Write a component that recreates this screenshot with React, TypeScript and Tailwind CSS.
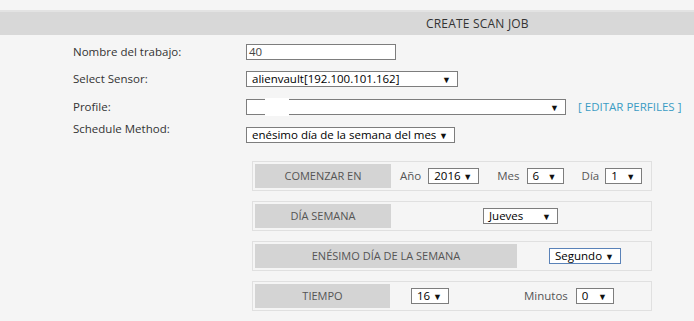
import type { ReactNode } from 'react';

function Caja({ w, children, focus = false, cover = false }: { w: string; children?: ReactNode; focus?: boolean; cover?: boolean }) {
  return (
    <div
      className={`relative flex h-[16px] items-center justify-between whitespace-nowrap bg-white pl-[5px] pr-[6px] text-[11.5px] leading-none text-black border ${
        focus ? 'border-[#5a82b8]' : 'border-[#7d7d7d]'
      } ${w}`}
    >
      <span>{children}</span>
      <span className="text-[9px] text-[#111]">▼</span>
      {cover && <div className="absolute left-[18px] top-[-2px] bottom-[-2px] w-[24px] bg-white" />}
    </div>
  );
}

function Etiqueta({ w, children }: { w: string; children: ReactNode }) {
  return (
    <div className={`flex h-[24px] items-center justify-center bg-[#d4d4d4] text-[11px] text-[#555] ${w}`}>
      {children}
    </div>
  );
}

export default function App() {
  return (
    <div className="min-h-[321px] w-[694px] bg-[#f5f5f5] pt-[10px] font-['Open_Sans',sans-serif] text-[11.5px] text-[#333]">
      <div className="flex h-[25px] items-center border-t-2 border-[#e3e3e3] bg-[#d8d8d8] pl-[426px] text-[12px] tracking-[0.2px] text-[#333]">
        CREATE SCAN JOB
      </div>

      <div className="flex flex-col pl-[73px]">
        <div className="mt-[9px] flex h-[16px] items-center">
          <div className="w-[173px]">Nombre del trabajo:</div>
          <div className="flex h-[16px] w-[150px] items-center border border-[#7d7d7d] bg-white pl-[2px] text-[11.5px] text-[#444]">40</div>
        </div>
        <div className="mt-[11px] flex h-[16px] items-center">
          <div className="w-[173px]">Select Sensor:</div>
          <Caja w="w-[212px]">alienvault[192.100.101.162]</Caja>
        </div>
        <div className="mt-[12px] flex h-[16px] items-center">
          <div className="w-[173px]">Profile:</div>
          <Caja w="w-[320px]" cover />
          <a className="ml-[12px] text-[11.5px] text-[#3a9cc4]">[ EDITAR PERFILES ]</a>
        </div>
        <div className="mt-[12px] flex h-[16px] items-start">
          <div className="-mt-[7px] w-[173px]">Schedule Method:</div>
          <Caja w="w-[209px]">enésimo día de la semana del mes</Caja>
        </div>
      </div>

      <div className="ml-[252px] mt-[18px] flex w-[400px] flex-col gap-[10px]">
        <div className="flex h-[30px] items-center border border-[#e0e0e0] p-[2px]">
          <Etiqueta w="w-[136px]">COMENZAR EN</Etiqueta>
          <span className="ml-[9px] text-[#555]">Año</span>
          <div className="ml-[7px]"><Caja w="w-[51px]">2016</Caja></div>
          <span className="ml-[18px] text-[#555]">Mes</span>
          <div className="ml-[7px]"><Caja w="w-[37px]">6</Caja></div>
          <span className="ml-[18px] text-[#555]">Día</span>
          <div className="ml-[6px]"><Caja w="w-[37px]">1</Caja></div>
        </div>

        <div className="flex h-[30px] items-center border border-[#e0e0e0] p-[2px]">
          <Etiqueta w="w-[136px]">DÍA SEMANA</Etiqueta>
          <div className="ml-[92px]"><Caja w="w-[75px]">Jueves</Caja></div>
        </div>

        <div className="flex h-[30px] items-center border border-[#e0e0e0] p-[2px]">
          <Etiqueta w="w-[262px]">ENÉSIMO DÍA DE LA SEMANA</Etiqueta>
          <div className="ml-[32px]"><Caja w="w-[72px]" focus>Segundo</Caja></div>
        </div>

        <div className="flex h-[30px] items-center border border-[#e0e0e0] p-[2px]">
          <Etiqueta w="w-[135px]">TIEMPO</Etiqueta>
          <div className="ml-[21px]"><Caja w="w-[38px]">16</Caja></div>
          <span className="ml-[75px] text-[#555]">Minutos</span>
          <div className="ml-[8px]"><Caja w="w-[38px]">0</Caja></div>
        </div>
      </div>
    </div>
  );
}
